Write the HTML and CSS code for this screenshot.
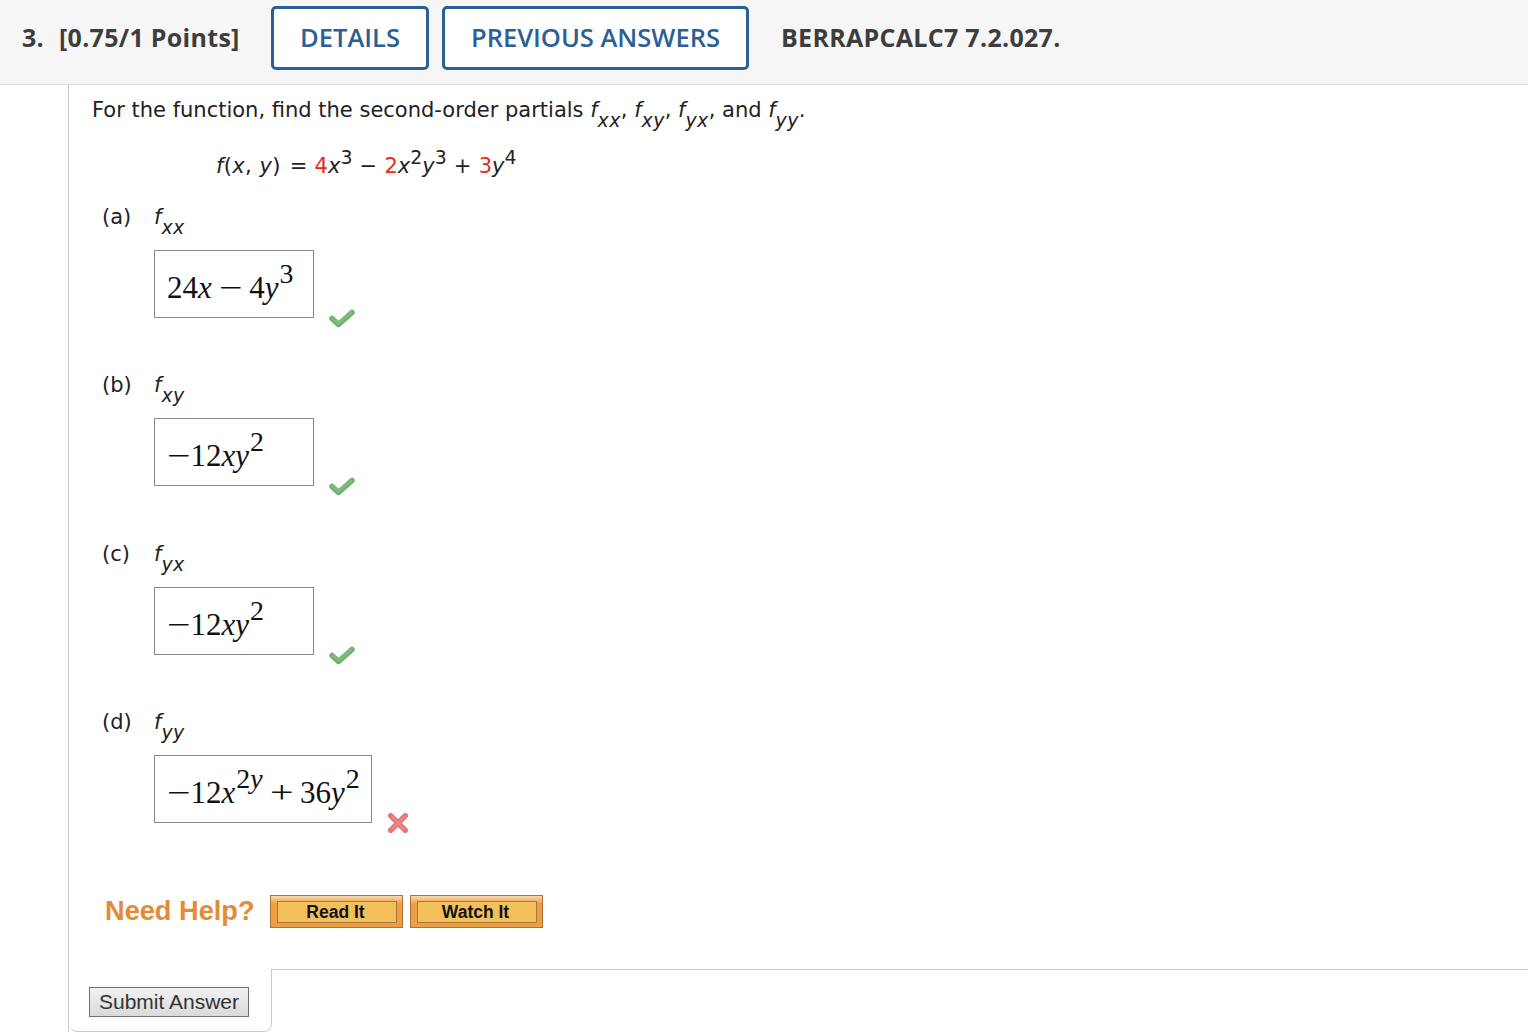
FILE: index.html
```html
<!DOCTYPE html>
<html lang="en">
<head>
  <meta charset="UTF-8">
  <meta name="viewport" content="width=device-width, initial-scale=1.0">
  <title>Question 3</title>
  <link rel="stylesheet" href="styles.css">
</head>
<body>
  <svg class="defs" width="0" height="0">
    <defs>
      <symbol id="check" viewBox="0 0 26 20">
        <path d="M3 10.5 L9.5 16.5 L23 4.5" fill="none" stroke="#5b9e58" stroke-width="5.5" stroke-linejoin="round" stroke-linecap="round" opacity="0.85"/>
        <path d="M3.5 10.5 L9.5 15.5 L22.5 4.5" fill="none" stroke="#7cc077" stroke-width="2.5" stroke-linecap="round"/>
      </symbol>
      <symbol id="cross" viewBox="0 0 24 22">
        <path d="M4 3 L20 19 M20 3 L4 19" fill="none" stroke="#e2686c" stroke-width="6" stroke-linecap="round" opacity="0.9"/>
        <path d="M5 4 L19 18 M19 4 L5 18" fill="none" stroke="#ef8486" stroke-width="2.5"/>
      </symbol>
    </defs>
  </svg>

  <header class="top">
    <div class="points"><span class="num">3.</span>[0.75/1 Points]</div>
    <a class="tab-btn details">DETAILS</a>
    <a class="tab-btn previous">PREVIOUS ANSWERS</a>
    <div class="ref">BERRAPCALC7 7.2.027.</div>
  </header>

  <main class="question">
    <p class="prompt">For the function, find the second-order partials <i>f</i><sub>xx</sub>, <i>f</i><sub>xy</sub>, <i>f</i><sub>yx</sub>, and <i>f</i><sub>yy</sub>.</p>
    <p class="formula"><span class="fn"><i>f</i>(<i>x</i>, <i>y</i>)</span> = <b>4</b><i>x</i><sup>3</sup> &minus; <b>2</b><i>x</i><sup>2</sup><i>y</i><sup>3</sup> + <b>3</b><i>y</i><sup>4</sup></p>

    <section class="part">
      <div class="part-label"><span class="letter">(a)</span><span><i>f</i><sub>xx</sub></span></div>
      <div class="answer-row">
        <div class="answer">24<i>x</i><span class="op"><span class="minus">&minus;</span></span>4<i>y</i><sup>3</sup></div>
        <svg class="mark"><use href="#check"/></svg>
      </div>
    </section>

    <section class="part">
      <div class="part-label"><span class="letter">(b)</span><span><i>f</i><sub>xy</sub></span></div>
      <div class="answer-row">
        <div class="answer"><span class="minus lead">&minus;</span>12<i>xy</i><sup>2</sup></div>
        <svg class="mark"><use href="#check"/></svg>
      </div>
    </section>

    <section class="part">
      <div class="part-label"><span class="letter">(c)</span><span><i>f</i><sub>yx</sub></span></div>
      <div class="answer-row">
        <div class="answer"><span class="minus lead">&minus;</span>12<i>xy</i><sup>2</sup></div>
        <svg class="mark"><use href="#check"/></svg>
      </div>
    </section>

    <section class="part">
      <div class="part-label"><span class="letter">(d)</span><span><i>f</i><sub>yy</sub></span></div>
      <div class="answer-row">
        <div class="answer wide"><span class="minus lead">&minus;</span>12<i>x</i><sup>2<i>y</i></sup><span class="op"><span class="minus">+</span></span>36<i>y</i><sup>2</sup></div>
        <svg class="mark cross"><use href="#cross"/></svg>
      </div>
    </section>

    <div class="help">
      <span class="help-title">Need Help?</span>
      <a class="help-btn"><span>Read It</span></a>
      <a class="help-btn"><span>Watch It</span></a>
    </div>

    <footer class="bottom">
      <div class="submit-tab"><button class="submit">Submit Answer</button></div>
      <div class="bottom-line"></div>
    </footer>
  </main>
</body>
</html>
```

FILE: styles.css
```css
html {
  box-sizing: border-box;
}
*, *:before, *:after {
  box-sizing: inherit;
}
body {
  margin: 0;
  height: 1032px;
  overflow: hidden;
  background: #fff;
  color: #333;
  font-family: "DejaVu Sans", sans-serif;
  font-size: 21px;
}
.defs {
  position: absolute;
}

.top {
  height: 85px;
  padding: 6px 0 0 22px;
  display: flex;
  align-items: flex-start;
  background: #f6f6f6;
  border-bottom: 1px solid #dcdcdc;
  font-family: "Open Sans", sans-serif;
  font-weight: 600;
  font-size: 25.5px;
  color: #3d3d3d;
}
.points {
  width: 249px;
  line-height: 62px;
  font-weight: 700;
  font-size: 25px;
  letter-spacing: 0.3px;
  white-space: nowrap;
}
.num {
  display: inline-block;
  width: 37px;
}
.tab-btn {
  height: 64px;
  line-height: 57px;
  border: 3px solid #2a6096;
  border-radius: 5px;
  text-align: center;
  color: #2a6096;
  background: #fff;
}
.details {
  width: 158px;
  margin-right: 13px;
}
.previous {
  width: 307px;
  margin-right: 32px;
}
.ref {
  line-height: 62px;
  font-weight: 700;
  font-size: 25px;
  letter-spacing: 0.3px;
}

.question {
  margin-left: 68px;
  height: 947px;
  padding: 0 0 0 23px;
  border-left: 1px solid #cbcbcb;
  display: flex;
  flex-direction: column;
}
.prompt {
  margin: 11px 0 0;
  line-height: 28px;
  color: #222;
  white-space: nowrap;
}
sub, sup {
  line-height: 0;
  font-size: 0.9em;
}
sub {
  font-style: italic;
  vertical-align: -10px;
  letter-spacing: 0.4px;
}
.formula {
  margin: 28px 0 0 124px;
  line-height: 28px;
  color: #222;
  word-spacing: 0.5px;
}
.fn {
  margin-right: 2px;
  letter-spacing: 0.3px;
}
.formula b {
  font-weight: normal;
  color: #e8291c;
}
.formula sup {
  vertical-align: 9px;
}

.part {
  margin: 0 0 0 10px;
  height: 168.3px;
}
.formula + .part {
  margin-top: 23px;
}
.part-label {
  display: flex;
  line-height: 28px;
  color: #222;
}
.letter {
  width: 52px;
}
.answer-row {
  margin: 19px 0 0 52px;
  display: flex;
  align-items: flex-end;
}
.answer {
  width: 160px;
  height: 68px;
  padding: 0 0 0 12px;
  border: 1px solid #888;
  font-family: "Liberation Serif", serif;
  font-size: 31px;
  line-height: 73px;
  color: #111;
  white-space: nowrap;
}
.answer i {
  padding-right: 1px;
}
.answer sup {
  vertical-align: 15px;
}
.answer.wide {
  width: 218px;
}
.op {
  margin: 0 9.5px;
}
.minus {
  display: inline-block;
  transform: scaleX(1.35);
}
.minus.lead {
  margin: 0 3px 0 3px;
}
.mark {
  width: 26px;
  height: 20px;
  margin-left: 15px;
  margin-bottom: -10px;
}
.mark.cross {
  width: 22px;
  height: 20px;
  margin-left: 15px;
  margin-bottom: -10px;
}

.help {
  margin: 18.6px 0 0 13px;
  display: flex;
  align-items: center;
  gap: 7px;
}
.help-title {
  width: 158px;
  padding-right: 8px;
  font-family: "Liberation Sans", sans-serif;
  font-weight: bold;
  font-size: 27.2px;
  color: #e38b35;
  white-space: nowrap;
}
.help-btn {
  width: 133px;
  height: 33px;
  padding: 5px 5px 4px 6px;
  background: linear-gradient(#f7d9ae, #ee9f43 25%);
  border: 1px solid #ad7338;
  font-family: "Liberation Sans", sans-serif;
  font-weight: bold;
  font-size: 17.5px;
  color: #111;
  text-align: center;
}
.help-btn span {
  display: block;
  height: 22px;
  line-height: 21px;
  padding-right: 3px;
  background: #f3bf5b;
  border: 1px solid #a9793c;
}

.bottom {
  margin: auto 0 0 -23px;
  display: flex;
}
.submit-tab {
  width: 203px;
  height: 63px;
  padding: 18px 0 0 20px;
  border-right: 1px solid #cbcbcb;
  border-bottom: 1px solid #cbcbcb;
  border-radius: 0 0 8px 8px;
}
.submit {
  display: block;
  width: 160px;
  height: 30px;
  padding: 0;
  background: linear-gradient(#f2f2f2, #dadada);
  border: 1px solid #707070;
  font-family: "Liberation Sans", sans-serif;
  font-size: 21px;
  color: #333;
}
.bottom-line {
  flex: 1;
  border-top: 1px solid #cbcbcb;
}
```
